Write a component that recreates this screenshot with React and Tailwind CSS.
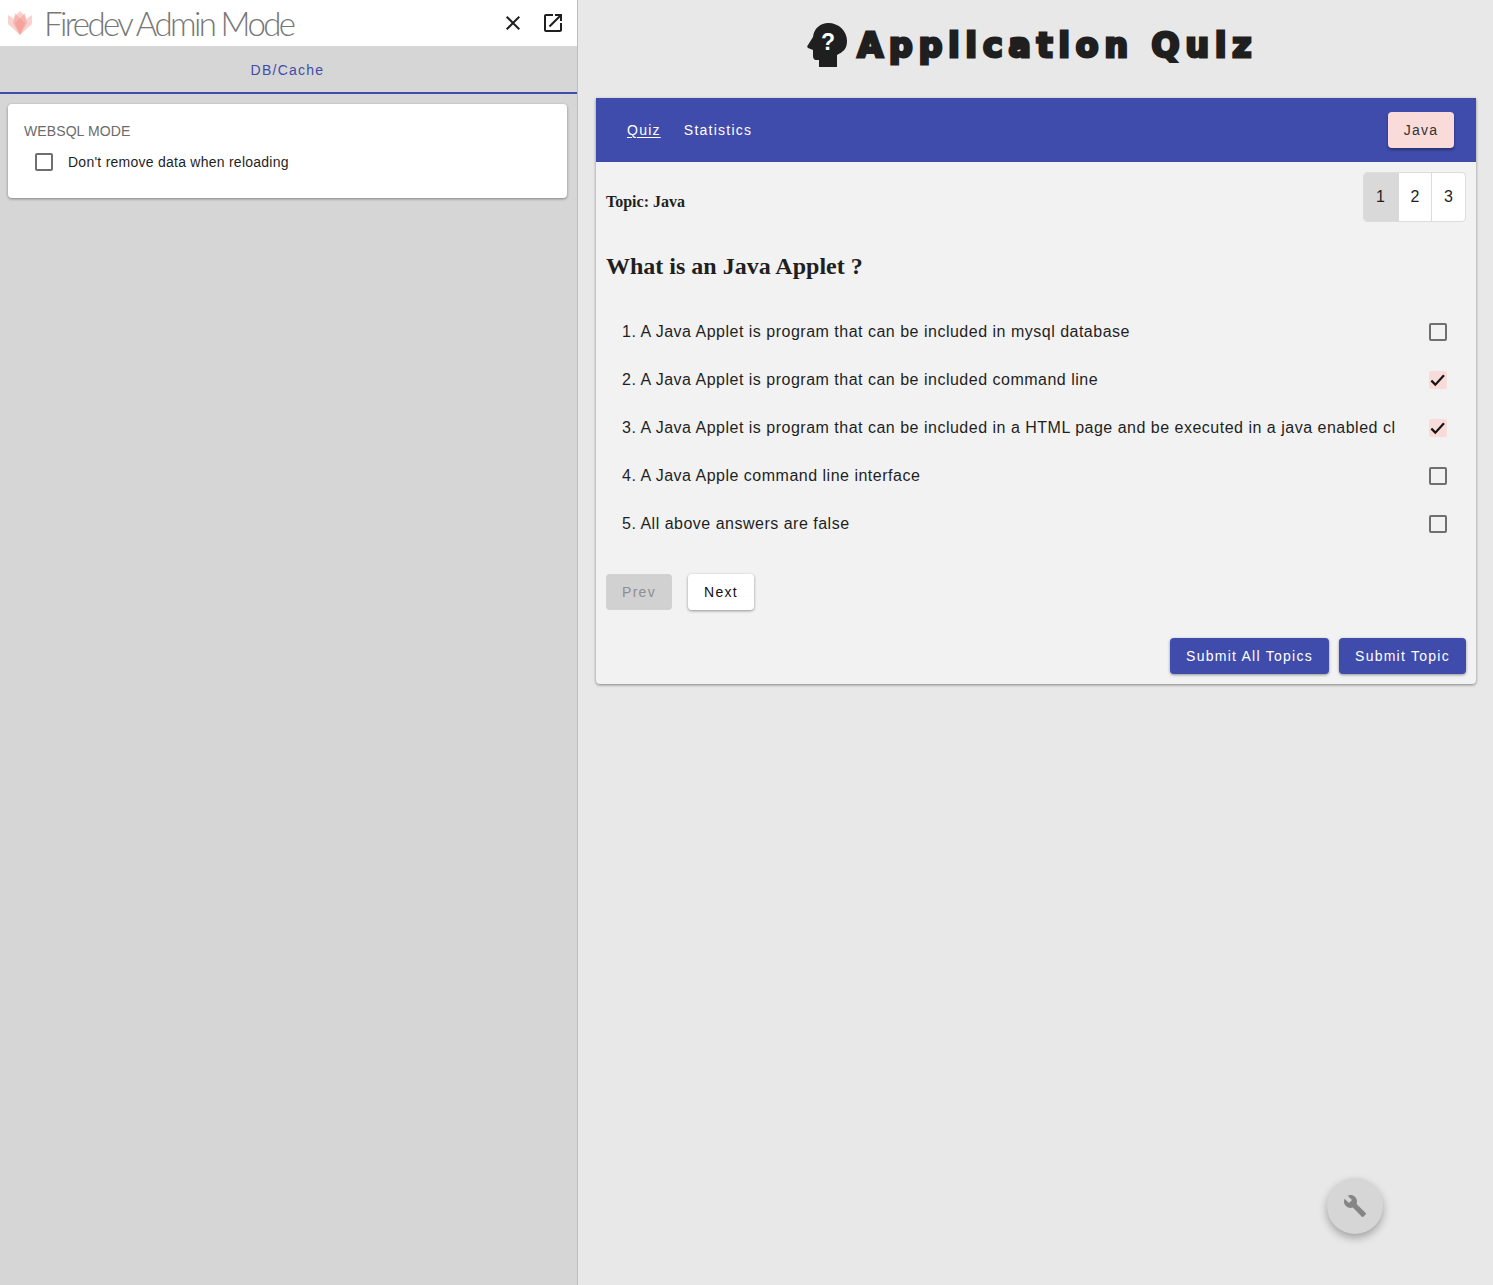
const CLOSE = "M19 6.41L17.59 5 12 10.59 6.41 5 5 6.41 10.59 12 5 17.59 6.41 19 12 13.41 17.59 19 19 17.59 13.41 12z";
const OPEN = "M19 19H5V5h7V3H5c-1.11 0-2 .9-2 2v14c0 1.1.89 2 2 2h14c1.1 0 2-.9 2-2v-7h-2v7zM14 3v2h3.59l-9.83 9.83 1.41 1.41L19 6.41V10h2V3h-7z";
const WRENCH = "M22.7 19l-9.1-9.1c.9-2.3.4-5-1.5-6.9-2-2-5-2.4-7.4-1.3L9 6 6 9 1.6 4.7C.4 7.1.9 10.1 2.9 12.1c1.9 1.9 4.6 2.4 6.9 1.5l9.1 9.1c.4.4 1 .4 1.4 0l2.3-2.3c.5-.4.5-1.1.1-1.4z";

function Icon({ d, className }) {
  return (
    <svg viewBox="0 0 24 24" className={className} fill="currentColor">
      <path d={d} />
    </svg>
  );
}

function Box({ checked }) {
  if (checked) {
    return (
      <span className="flex h-[18px] w-[18px] shrink-0 items-center justify-center rounded-[2px] bg-[#f9dcd9]">
        <svg viewBox="0 0 24 24" className="h-[16px] w-[16px]" fill="none" stroke="#161616" strokeWidth="3.4">
          <path d="M2 13l6 6L21 5" />
        </svg>
      </span>
    );
  }
  return <span className="block h-[18px] w-[18px] shrink-0 rounded-[2px] border-2 border-[#6f6f6f]" />;
}

function Logo() {
  return (
    <svg viewBox="0 0 26 26" className="h-[26px] w-[26px]">
      <g fill="#f28b82" fillOpacity="0.4">
        <path d="M13 25 L1 14 L1 5 L7 9 L8 3 L13 8 L18 3 L19 9 L25 5 L25 14 Z" />
        <path d="M13 25 L6 13 L8 6 L13 1 L18 6 L20 13 Z" />
        <path d="M13 25 L8 13 L13 8 L18 13 Z" />
      </g>
    </svg>
  );
}

function HeadIcon() {
  return (
    <svg viewBox="0 0 42 46" className="h-[46px] w-[42px] shrink-0">
      <path
        fill="#1f1f1f"
        d="M12 45 V38 H9 C7 38 6 36 6 34 V28 L1 26 C0 25 0 24 1 23 L6 15 C7 6 14 1 21 1 C32 1 40 9 40 19 C40 27 36 30 30 33 V45 Z"
      />
      <text x="21" y="28" textAnchor="middle" fill="#ffffff" fontSize="23" fontWeight="700" fontFamily="Liberation Sans, sans-serif">?</text>
    </svg>
  );
}

const options = [
  ["1. A Java Applet is program that can be included in mysql database", false],
  ["2. A Java Applet is program that can be included command line", true],
  ["3. A Java Applet is program that can be included in a HTML page and be executed in a java enabled client browser", true],
  ["4. A Java Apple command line interface", false],
  ["5. All above answers are false", false],
];

export default function App() {
  return (
    <div className="flex h-[1285px] w-[1493px] overflow-hidden font-['Liberation_Sans',sans-serif] text-[#1f1f1f]">
      <aside className="flex w-[578px] shrink-0 flex-col border-r border-[#bdbdbd] bg-[#d6d6d6]">
        <header className="flex h-[46px] items-center bg-white pl-[7px] pr-[12px]">
          <Logo />
          <span className="ml-[11px] pt-[1px] font-['Lato',sans-serif] text-[33px] font-light tracking-[-2.6px] text-[#777777]">Firedev Admin Mode</span>
          <div className="ml-auto flex items-center gap-[16px]">
            <Icon d={CLOSE} className="h-6 w-6 text-[#1f1f1f]" />
            <Icon d={OPEN} className="h-6 w-6 text-[#1f1f1f]" />
          </div>
        </header>
        <div className="flex h-[48px] items-center justify-center border-b-2 border-[#3f4cab] pr-[2px] pt-[1px] text-sm tracking-[1.25px] text-[#3f4cab]">
          DB/Cache
        </div>
        <section className="ml-2 mr-[10px] mt-[10px] h-[94px] rounded bg-white px-4 pt-[19px] shadow-[0_1px_3px_rgba(0,0,0,0.4)]">
          <div className="text-sm leading-4 tracking-[0.1px] text-[#6b6b6b]">WEBSQL MODE</div>
          <label className="mt-[14px] flex items-center pl-[11px] text-sm leading-4 tracking-[0.25px]">
            <Box />
            <span className="ml-[15px]">Don't remove data when reloading</span>
          </label>
        </section>
      </aside>

      <main className="relative min-w-0 flex-1 bg-[#e8e8e8]">
        <div className="flex h-[98px] items-start justify-center pr-[6px] pt-[22px]">
          <HeadIcon />
          <span className="ml-[8px] mt-[4px] whitespace-nowrap font-['DejaVu_Sans',sans-serif] text-[33px] font-bold leading-[40px] tracking-[6px] text-[#1f1f1f] [-webkit-text-stroke:3px_#1f1f1f]">
            Application Quiz
          </span>
        </div>

        <section className="ml-[18px] mr-[17px] h-[586px] rounded-b bg-[#f2f2f2] shadow-[0_1px_3px_rgba(0,0,0,0.45)]">
          <nav className="flex h-[64px] items-center bg-[#3f4cab] pl-[31px] pr-[22px] text-sm tracking-[1.25px] text-white">
            <a className="underline underline-offset-2">Quiz</a>
            <a className="ml-[23px]">Statistics</a>
            <button className="ml-auto h-9 w-[66px] rounded bg-[#f9dcd9] text-[#333333] shadow-[0_2px_3px_rgba(0,0,0,0.35)]">Java</button>
          </nav>

          <div className="flex items-center justify-between pl-[10px] pr-[10px] pt-[10px]">
            <span className="mt-[10px] font-['Liberation_Serif',serif] text-base font-bold">Topic: Java</span>
            <div className="flex h-[50px] overflow-hidden rounded border border-[#dcdcdc] bg-white text-base">
              <span className="flex w-[35px] items-center justify-center bg-[#d9d9d9] pr-[2px]">1</span>
              <span className="flex w-[33px] items-center justify-center border-r border-[#dcdcdc]">2</span>
              <span className="flex w-[33px] items-center justify-center">3</span>
            </div>
          </div>

          <h1 className="mt-[16px] pl-[10px] font-['Liberation_Serif',serif] text-2xl font-bold leading-[56px] text-[#1f1f1f]">What is an Java Applet ?</h1>

          <ul className="mt-[14px]">
            {options.map(([text, checked]) => (
              <li key={text} className="flex h-12 items-center pl-[26px] pr-[29px] text-base tracking-[0.5px]">
                <span className="mr-[34px] min-w-0 flex-1 overflow-hidden whitespace-nowrap">{text}</span>
                <Box checked={checked} />
              </li>
            ))}
          </ul>

          <div className="mt-[26px] flex gap-4 pl-[10px] text-sm tracking-[1.25px]">
            <button className="h-9 w-[66px] rounded bg-[#d1d1d1] text-[#8f8f8f]">Prev</button>
            <button className="h-9 w-[66px] rounded bg-white text-[#111111] shadow-[0_1px_3px_rgba(0,0,0,0.4)]">Next</button>
          </div>

          <div className="mt-[28px] flex justify-end gap-[10px] pr-[10px] text-sm tracking-[1.25px] text-white">
            <button className="h-9 w-[159px] rounded bg-[#3f4cab] shadow-[0_1px_3px_rgba(0,0,0,0.4)]">Submit All Topics</button>
            <button className="h-9 w-[127px] rounded bg-[#3f4cab] shadow-[0_1px_3px_rgba(0,0,0,0.4)]">Submit Topic</button>
          </div>
        </section>

        <button className="absolute left-[749px] top-[1178px] flex h-14 w-14 items-center justify-center rounded-full bg-[#d6d6d6] shadow-[0_4px_8px_rgba(0,0,0,0.3)]">
          <Icon d={WRENCH} className="h-6 w-6 text-[#858585]" />
        </button>
      </main>
    </div>
  );
}
